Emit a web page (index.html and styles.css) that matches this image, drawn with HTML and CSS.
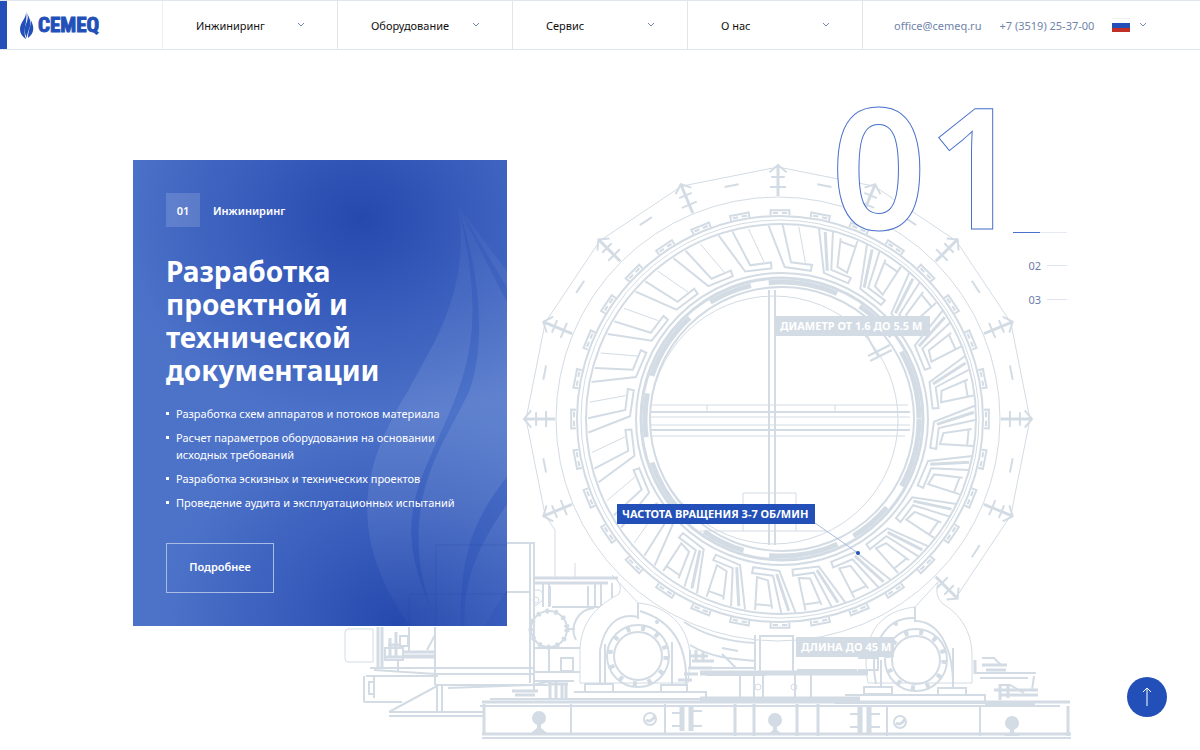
FILE: index.html
```html
<!DOCTYPE html>
<html lang="ru">
<head>
<meta charset="utf-8">
<meta name="viewport" content="width=device-width, initial-scale=1">
<title>CEMEQ</title>
<link rel="stylesheet" href="styles.css">
</head>
<body>
<header class="header">
  <a class="logo" href="#" aria-label="CEMEQ">
    <svg class="logo-flame" viewBox="0 0 14 28" aria-hidden="true">
      <path d="M6 0C7 7 0 11 0 18c0 5 3 8 6 10C2 18 8 13 6 0z"/>
      <path d="M7 2c3 8-4 12-2 20 0 1 1 3 2 5 0-7 5-12 3-18C9 6 8 4 7 2z"/>
      <path d="M10 7c3 5-2 10-2 20 4-3 6-7 5-12-.5-3-2-5-3-8z"/>
    </svg>
    <span class="logo-name">CEMEQ</span>
  </a>
  <nav class="menu">
    <button class="menu-item" type="button">Инжиниринг <svg class="chevron" viewBox="0 0 8 6"><path d="M1 1l3 3 3-3"/></svg></button>
    <button class="menu-item" type="button">Оборудование <svg class="chevron" viewBox="0 0 8 6"><path d="M1 1l3 3 3-3"/></svg></button>
    <button class="menu-item" type="button">Сервис <svg class="chevron" viewBox="0 0 8 6"><path d="M1 1l3 3 3-3"/></svg></button>
    <button class="menu-item" type="button">О нас <svg class="chevron" viewBox="0 0 8 6"><path d="M1 1l3 3 3-3"/></svg></button>
  </nav>
  <div class="contacts">
    <a href="mailto:office@cemeq.ru">office@cemeq.ru</a>
    <a href="tel:+73519253700">+7 (3519) 25-37-00</a>
    <button class="lang" type="button" aria-label="Русский"><span class="flag"></span><svg class="chevron" viewBox="0 0 8 6"><path d="M1 1l3 3 3-3"/></svg></button>
  </div>
</header>

<main class="hero">
  <svg class="machine" viewBox="340 100 740 650" aria-hidden="true">
    <g class="ink">
      <circle cx="778" cy="419" r="222"/>
      <circle cx="780" cy="419" r="203" class="mid"/>
      <circle cx="780" cy="419" r="199"/>
      <circle cx="781" cy="419" r="195" class="mid"/>
      <circle cx="782" cy="419" r="146" class="mid"/>
      <circle cx="782" cy="419" r="141" class="bold"/>
      <circle cx="782" cy="419" r="137" class="heavy" stroke-dasharray="70 26 44 18"/>
      <circle cx="782" cy="419" r="132" class="mid"/>
      <circle cx="774" cy="420" r="124" />
      <g id="shell"></g>
      <path class="mid" d="M769 290V545M775 290V545M650 412H910M650 430H910"/>
      <path d="M650 405H908M650 417H910M650 425H910M650 436H905M707 405v7M835 405v7M743 531V493H796V531M700 531H826"/>
      <path class="mid" d="M870 361l22-11M868 356l22-11M866 334l12 22"/>
    </g>
    <g class="ink">
      <path class="mid" d="M507 543H534V690M530 543V683M507 592H530M435 627V685"/>
      <path d="M545 515L555 530V577M575 563v14M348 629h25v33h-25q-3 0-3-4v-25q0-4 3-4zM534 590h6q4 3 3 8t-9 8"/>
      <circle cx="536" cy="600" r="3"/>
      <path class="bold" d="M534 578H618M534 583H608M378 627V668M382 627V668"/>
      <path class="mid" d="M543 583v24M549 583v24M552 607h50M595 583v24M601 583v24M588 586v20M612 583v18M550 586v20"/>
      <circle cx="549" cy="629" r="18" class="mid"/>
      <circle cx="549" cy="629" r="18" class="heavy" stroke-dasharray="3 6"/>
      <path class="mid" d="M594 608a22 22 0 0 0-18 32M568 629h7M534 648h46M549 648v24M561 658h12v13h-12zM534 672h46M534 681h40"/>
      <path class="bold" d="M390 638v18M396 632v24M388 645h12M386 657h48M402 652h33M402 656h32"/>
      <path class="mid" d="M409 627v24M427 650l8-15M400 636h8v10h-8zM385 648h18v12h-18zM398 660v12M374 670l62 4M366 676h72M364 676v26M374 676v22M364 702h38M369 682h5v12h-5z"/>
      <path class="mid" d="M370 668h165M436 674h98M435 685h113M389 712l48-26M389 712h95M389 716h95M437 686v26M442 686v26M448 688l84-3 20-4"/>
      <path class="bold" d="M512 691h26M515 695h20M550 682v16M556 680v18M562 683v15M566 683v15M548 684h20"/>
    </g>
    <g class="ink">
      <path class="paper" d="M580 683V648C582 615 605 602 619 594Q624 585 612 575L638 603C665 605 690 625 690 658L688 683z"/>
      <path class="paper" d="M868 683C862 650 868 612 915 607L938 582Q934 596 943 604C960 614 972 632 972 655V683z"/>
      <path class="mid" d="M600 683V650c4-22 16-38 38-33M638 603v16M640 611c36 11 48 39 46 76M916 618c-31-2-48 28-40 66M915 607v14c24 0 38 27 38 64"/>
      <circle cx="638" cy="656" r="31" class="mid"/>
      <circle cx="638" cy="656" r="28" class="heavy" stroke-dasharray="4 11"/>
      <circle cx="638" cy="656" r="24" class="mid"/>
      <circle cx="916" cy="660" r="31" class="mid"/>
      <circle cx="916" cy="660" r="28" class="heavy" stroke-dasharray="4 11"/>
      <circle cx="916" cy="660" r="24" class="mid"/>
      <path class="mid" d="M605 644v39M672 642v42M881 660v27M953 648v40"/>
      <circle class="dot" cx="657" cy="622" r="2"/>
      <circle class="dot" cx="896" cy="624" r="2"/>
      <path class="mid paper" d="M585 684h28v8h-28zM661 685h26v7h-26zM864 687h28v7h-28zM938 688h28v7h-28z"/>
      <path class="mid" d="M574 692h132v7H560M845 695h140v8H835"/>
      <path class="bold" d="M678 680h14M684 674h14M690 656h18M692 661h22M696 650v10M703 652v9M690 668h22M975 660v14M982 665h25M986 670h20M994 690h44M1000 695h38M1000 684v16M1008 684v14"/>
      <path class="mid" d="M690 650v18M688 668h68M684 622c22 14 44 20 72 21M690 645c20 12 40 14 66 16M722 654l14 14M722 648l16 3M755 635v35M760 636h33v36h-33zM797 670h60M706 675h60M740 675v26M754 675v28M763 675v24M795 675v24M811 675v24M858 658h20v12h-20M976 673h60M980 678h48M1034 676l-2 14M982 658h12l8 8M1000 685h10l14 8"/>
      <circle cx="758" cy="687" r="3"/><circle cx="794" cy="687" r="3"/>
      <path class="heavy" d="M700 699H860M985 704h50M700 673H868"/>
    </g>
    <g class="ink">
      <path class="bold" d="M482 702H1070M482 734H1071M484 704v29M1068 706v30M735 704v32M754 704v32M797 704v32M818 704v32"/>
      <path class="mid" d="M490 699H700M480 706H1060M665 704v30M571 704v29M887 706v30M980 706v30M482 738H1071M672 713h12M672 726h12M692 711h10M692 726h10M850 714h12M850 727h12M870 714h10M870 727h10"/>
      <path class="heavy" d="M682 705v26M691 705v26M860 706v27M869 706v27"/>
      <circle class="dot" cx="539" cy="718" r="7"/><circle class="dot" cx="775" cy="720" r="7"/><circle class="dot" cx="1012" cy="723" r="7"/>
      <path class="dot" d="M537 720h4v8l6 5h-16l6-5zM773 722h4v8l6 5h-16l6-5zM1010 724h4v8l6 4h-16l6-4z"/>
      <circle class="mid" cx="650" cy="719" r="6"/><circle class="mid" cx="900" cy="722" r="6"/>
      <path class="bold" d="M646 720q5 3 9-4M896 723q5 3 9-4"/>
    </g>
    <rect class="tag" x="775" y="316" width="155" height="20"/>
    <text class="tag-text" x="780" y="330">ДИАМЕТР ОТ 1.6 ДО 5.5 М</text>
    <rect class="tag" x="796" y="637" width="98" height="20"/>
    <text class="tag-text" x="801" y="651">ДЛИНА ДО 45 М</text>
    <path class="leader" d="M815 523L858 553"/>
    <circle class="pin" cx="858" cy="553" r="2"/>
    <rect class="pin" x="617" y="504" width="198" height="20"/>
    <text class="tag-text" x="622" y="518">ЧАСТОТА ВРАЩЕНИЯ 3-7 ОБ/МИН</text>
  </svg>

  <article class="card">
    <svg class="flame" viewBox="0 0 373 467" preserveAspectRatio="xMaxYMid slice" aria-hidden="true">
      <defs><linearGradient id="fade" x1="0" y1="47" x2="0" y2="467" gradientUnits="userSpaceOnUse"><stop offset="0" stop-color="#fff" stop-opacity=".03"/><stop offset=".45" stop-color="#fff" stop-opacity=".1"/><stop offset=".7" stop-color="#fff" stop-opacity=".09"/><stop offset="1" stop-color="#fff" stop-opacity=".02"/></linearGradient></defs>
      <g fill="url(#fade)">
        <path d="M324 47C338 130 298 187 275 230 232 300 208 370 277 467H305C278 407 264 367 296 298 330 220 356 180 324 47z"/>
        <path d="M324 47C345 110 353 180 336 230 312 285 255 345 304 467H327C325 395 341 357 373 317V143z"/>
        <path d="M324 47L373 128V112z"/>
        <path d="M373 345C340 390 328 430 331 467H349L373 430z"/>
      </g>
      <path class="shade" d="M302 385h71M302 385v82M276 434h97M276 434v33"/>
    </svg>
    <div class="card-top"><span class="badge">01</span><span>Инжиниринг</span></div>
    <h1 class="title">Разработка проектной и технической документации</h1>
    <ul class="list">
      <li>Разработка схем аппаратов и потоков материала</li>
      <li>Расчет параметров оборудования на основании исходных требований</li>
      <li>Разработка эскизных и технических проектов</li>
      <li>Проведение аудита и эксплуатационных испытаний</li>
    </ul>
    <a class="more" href="#">Подробнее</a>
  </article>

  <nav class="slides" aria-label="Слайды">
    <div class="slide-current"><span class="big">01</span><span class="progress"></span></div>
    <button class="slide" type="button">02</button>
    <button class="slide" type="button">03</button>
  </nav>
</main>

<button class="to-top" type="button" aria-label="Наверх">
  <svg viewBox="0 0 10 20"><path d="M5 19V1M1 5l4-4 4 4"/></svg>
</button>
<script src="machine.js"></script>
</body>
</html>
```
FILE: styles.css
```css
* { box-sizing: border-box; }
body {
  margin: 0;
  background: #fff;
  color: #111;
  font: 11px/17px "Noto Sans", sans-serif;
}
button { border: 0; padding: 0; background: none; color: inherit; font: inherit; cursor: pointer; }
a { color: inherit; text-decoration: none; }

.header {
  display: flex;
  height: 50px;
  border-top: 1px solid #e1e6ec;
  border-bottom: 1px solid #e1e6ec;
  box-shadow: inset 7px 0 #2250b8;
}
.logo { display: flex; align-items: center; flex: 0 0 163px; gap: 4px; padding-left: 20px; border-right: 1px solid #eceff3; color: #2250b8; }
.logo-flame { width: 14px; height: 28px; fill: #2250b8; }
.logo-name { font: 700 21px/24px "Liberation Sans Narrow", "Roboto Condensed", "Liberation Sans", sans-serif; -webkit-text-stroke: 1px #2250b8; }
.menu { display: flex; }
.menu-item { display: flex; align-items: center; justify-content: space-between; width: 175px; padding: 0 32px 0 33px; border-right: 1px solid #e1e6ec; }
.chevron { width: 8px; height: 6px; fill: none; stroke: #7487b4; }
.contacts { display: flex; align-items: center; gap: 18px; padding-left: 31px; color: #7083ab; white-space: nowrap; }
.lang { display: flex; align-items: center; gap: 9px; }
.flag { width: 18px; height: 14px; border-top: 1px solid #eef0f4; background: linear-gradient(#fff 4px, #2250b8 4px 9px, #c03028 9px); }

.hero { position: relative; display: flex; justify-content: space-between; align-items: flex-start; min-height: 700px; padding: 50px 133px 0; }
.machine { position: absolute; left: 340px; top: 50px; width: 740px; height: 650px; }
.ink { fill: none; stroke: #d3dce4; stroke-width: 1; }
.mid { stroke-width: 2; }
.bold { stroke-width: 3; }
.heavy { stroke-width: 5; }
.paper { fill: #fff; }
.dot { fill: #d3dce4; stroke: none; }
.tag { fill: #d3dce4; }
.tag-text { fill: #fff; font: 700 11px "Noto Sans", sans-serif; }
.leader { stroke: #a9bbdf; }
.pin { fill: #2250b8; }

.card {
  position: relative;
  width: 374px;
  margin-top: 60px;
  padding: 33px;
  color: #fff;
  background:
    radial-gradient(ellipse 250px 210px at 228px 58px, #2144aae6, #2c50b4b3 40%, #4d73c900),
    radial-gradient(ellipse 240px 220px at 265px 467px, #2144aae6, #2c50b4b3 40%, #4d73c900),
    #4d73c9;
}
.flame { position: absolute; inset: 0; width: 100%; height: 100%; }
.shade { fill: none; stroke: #1a3c9d; stroke-opacity: .1; stroke-width: 2; }
.card-top { position: relative; display: flex; align-items: center; gap: 13px; font-weight: 600; }
.badge { display: grid; place-items: center; width: 34px; height: 34px; background: rgba(255,255,255,.15); }
.title { position: relative; max-width: 240px; margin: 28px 0 0; font-size: 28px; line-height: 33px; font-weight: 700; }
.list { position: relative; margin: 18px 0 0; padding: 0; list-style: none; }
.list li { position: relative; padding-left: 10px; margin-bottom: 7px; }
.list li::before { content: ""; position: absolute; left: 0; top: 7px; width: 3px; height: 3px; background: #fff; }
.more { position: relative; display: grid; place-items: center; width: 108px; height: 50px; margin-top: 32px; padding-bottom: 4px; border: 1px solid #a9bce6; font-weight: 600; }

.slides { position: relative; display: flex; flex-direction: column; align-items: flex-end; color: #6b7da9; }
.slide-current { display: flex; align-items: flex-end; height: 140px; }
.big { margin-right: -10px; color: #fff; font-size: 168px; line-height: 152px; font-weight: 600; -webkit-text-stroke: 1px #4a72cc; }
.progress { width: 54px; height: 1px; margin-bottom: 7px; background: linear-gradient(90deg, #4a72cc 50%, #e6ebf3 50%); }
.slide { display: flex; align-items: center; gap: 6px; margin-top: 17px; }
.slide::after { content: ""; width: 20px; height: 1px; background: #dfe5ef; }

.to-top { position: fixed; right: 33px; bottom: 33px; display: grid; place-items: center; width: 40px; height: 40px; border-radius: 50%; background: #2250b8; }
.to-top svg { width: 10px; height: 20px; fill: none; stroke: #fff; }
```
FILE: machine.js
```js
const shell = document.getElementById('shell');
const at = (cx, cy, deg, r) => {
  const a = deg * Math.PI / 180;
  return (cx + r * Math.sin(a)).toFixed(1) + ' ' + (cy - r * Math.cos(a)).toFixed(1);
};
const draw = (d, cls) => {
  const p = document.createElementNS('http://www.w3.org/2000/svg', 'path');
  p.setAttribute('d', d);
  if (cls) p.setAttribute('class', cls);
  shell.append(p);
};

// Flanged shell segments; the ones behind the base stay hidden
for (let i = 0; i < 16; i++) {
  const t = i * 22.5;
  const p = (deg, r) => at(778, 419, t + deg, r);
  if (i < 6 || i > 10) draw(`M${p(0, 252)}L${p(22.5, 252)}`);
  if (i > 6 && i < 11) continue;
  draw(`M${p(0, 254)}L${p(0, 223)}`, 'bold');
  draw(`M${p(-2, 247)}L${p(0, 254)}L${p(2, 247)}M${p(-1.6, 242)}L${p(1.6, 242)}M${p(-2, 232)}L${p(2, 232)}`, 'mid');
  if (i !== 6) draw(`M${p(9.5, 238)}L${p(13, 238)}`, 'mid');
}

// Bolted plates along the rim
for (let i = 0; i < 32; i++) {
  const t = i * 11.25;
  const p = (deg, r) => at(780, 419, t + deg, r);
  draw(`M${p(-2.6, 204)}L${p(-2.6, 209)}L${p(2.6, 209)}L${p(2.6, 204)}M${p(-2, 206)}L${p(-0.5, 206)}M${p(0.5, 206)}L${p(2, 206)}`, 'mid');
}

// Lifters
for (let i = 0; i < 24; i++) {
  const t = i * 15;
  const p = (deg, r) => at(782, 419, t + deg, r);
  draw(`M${p(-19, 194)}L${p(-14, 152)}L${p(-4, 151)}L${p(-4, 157)}L${p(-11.7, 157)}L${p(-14.8, 194)}`, 'mid');
  if (t > 15 && t < 235) {
    draw(`M${p(-12, 190)}L${p(-10, 162)}L${p(-6, 160)}L${p(-7, 193)}M${p(-12, 187)}L${p(-7, 187)}`, 'mid');
    draw(`M${p(-17, 192)}L${p(-13, 155)}`, 'bold');
  } else {
    draw(`M${p(-10, 193)}L${p(-6.5, 158)}`);
  }
}
```
